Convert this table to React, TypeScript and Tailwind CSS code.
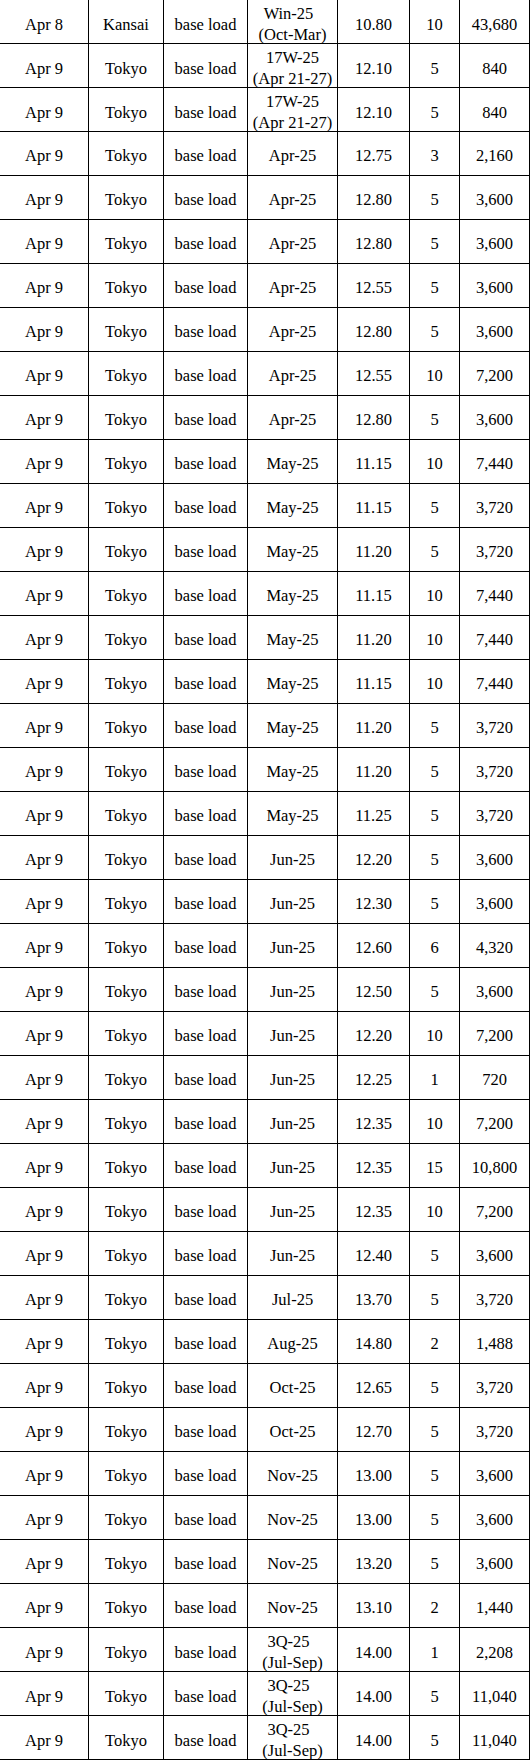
type Trade = {
  date: string
  area: string
  load: string
  term: string
  sub?: string
  shift?: boolean
  price: string
  qty: string
  volume: string
}

const t = (
  term: string,
  price: string,
  qty: string,
  volume: string,
  sub?: string,
  shift?: boolean,
): Trade => ({ date: 'Apr 9', area: 'Tokyo', load: 'base load', term, sub, shift, price, qty, volume })

const rows: Trade[] = [
  { date: 'Apr 8', area: 'Kansai', load: 'base load', term: 'Win-25', sub: '(Oct-Mar)', shift: true, price: '10.80', qty: '10', volume: '43,680' },
  t('17W-25', '12.10', '5', '840', '(Apr 21-27)'),
  t('17W-25', '12.10', '5', '840', '(Apr 21-27)'),
  t('Apr-25', '12.75', '3', '2,160'),
  t('Apr-25', '12.80', '5', '3,600'),
  t('Apr-25', '12.80', '5', '3,600'),
  t('Apr-25', '12.55', '5', '3,600'),
  t('Apr-25', '12.80', '5', '3,600'),
  t('Apr-25', '12.55', '10', '7,200'),
  t('Apr-25', '12.80', '5', '3,600'),
  t('May-25', '11.15', '10', '7,440'),
  t('May-25', '11.15', '5', '3,720'),
  t('May-25', '11.20', '5', '3,720'),
  t('May-25', '11.15', '10', '7,440'),
  t('May-25', '11.20', '10', '7,440'),
  t('May-25', '11.15', '10', '7,440'),
  t('May-25', '11.20', '5', '3,720'),
  t('May-25', '11.20', '5', '3,720'),
  t('May-25', '11.25', '5', '3,720'),
  t('Jun-25', '12.20', '5', '3,600'),
  t('Jun-25', '12.30', '5', '3,600'),
  t('Jun-25', '12.60', '6', '4,320'),
  t('Jun-25', '12.50', '5', '3,600'),
  t('Jun-25', '12.20', '10', '7,200'),
  t('Jun-25', '12.25', '1', '720'),
  t('Jun-25', '12.35', '10', '7,200'),
  t('Jun-25', '12.35', '15', '10,800'),
  t('Jun-25', '12.35', '10', '7,200'),
  t('Jun-25', '12.40', '5', '3,600'),
  t('Jul-25', '13.70', '5', '3,720'),
  t('Aug-25', '14.80', '2', '1,488'),
  t('Oct-25', '12.65', '5', '3,720'),
  t('Oct-25', '12.70', '5', '3,720'),
  t('Nov-25', '13.00', '5', '3,600'),
  t('Nov-25', '13.00', '5', '3,600'),
  t('Nov-25', '13.20', '5', '3,600'),
  t('Nov-25', '13.10', '2', '1,440'),
  t('3Q-25', '14.00', '1', '2,208', '(Jul-Sep)', true),
  t('3Q-25', '14.00', '5', '11,040', '(Jul-Sep)', true),
  t('3Q-25', '14.00', '5', '11,040', '(Jul-Sep)', true),
]

function Cell({ children }: { children: React.ReactNode }) {
  return (
    <div className="flex flex-col items-center justify-center border-r border-black pt-[3px] text-center">
      {children}
    </div>
  )
}

export default function App() {
  return (
    <div
      className="w-[530px] bg-white text-[16.5px] leading-[21px] text-black"
      style={{ fontFamily: '"Liberation Serif", "Times New Roman", serif' }}
    >
      {rows.map((r, i) => (
        <div
          key={i}
          className="grid h-[44px] grid-cols-[89px_75px_84px_90px_72px_50px_70px] border-b border-black"
        >
          <Cell>{r.date}</Cell>
          <Cell>{r.area}</Cell>
          <Cell>{r.load}</Cell>
          <Cell>
            <span className={r.shift ? 'pr-2' : ''}>{r.term}</span>
            {r.sub && <span className="whitespace-nowrap">{r.sub}</span>}
          </Cell>
          <Cell>{r.price}</Cell>
          <Cell>{r.qty}</Cell>
          <Cell>{r.volume}</Cell>
        </div>
      ))}
    </div>
  )
}
